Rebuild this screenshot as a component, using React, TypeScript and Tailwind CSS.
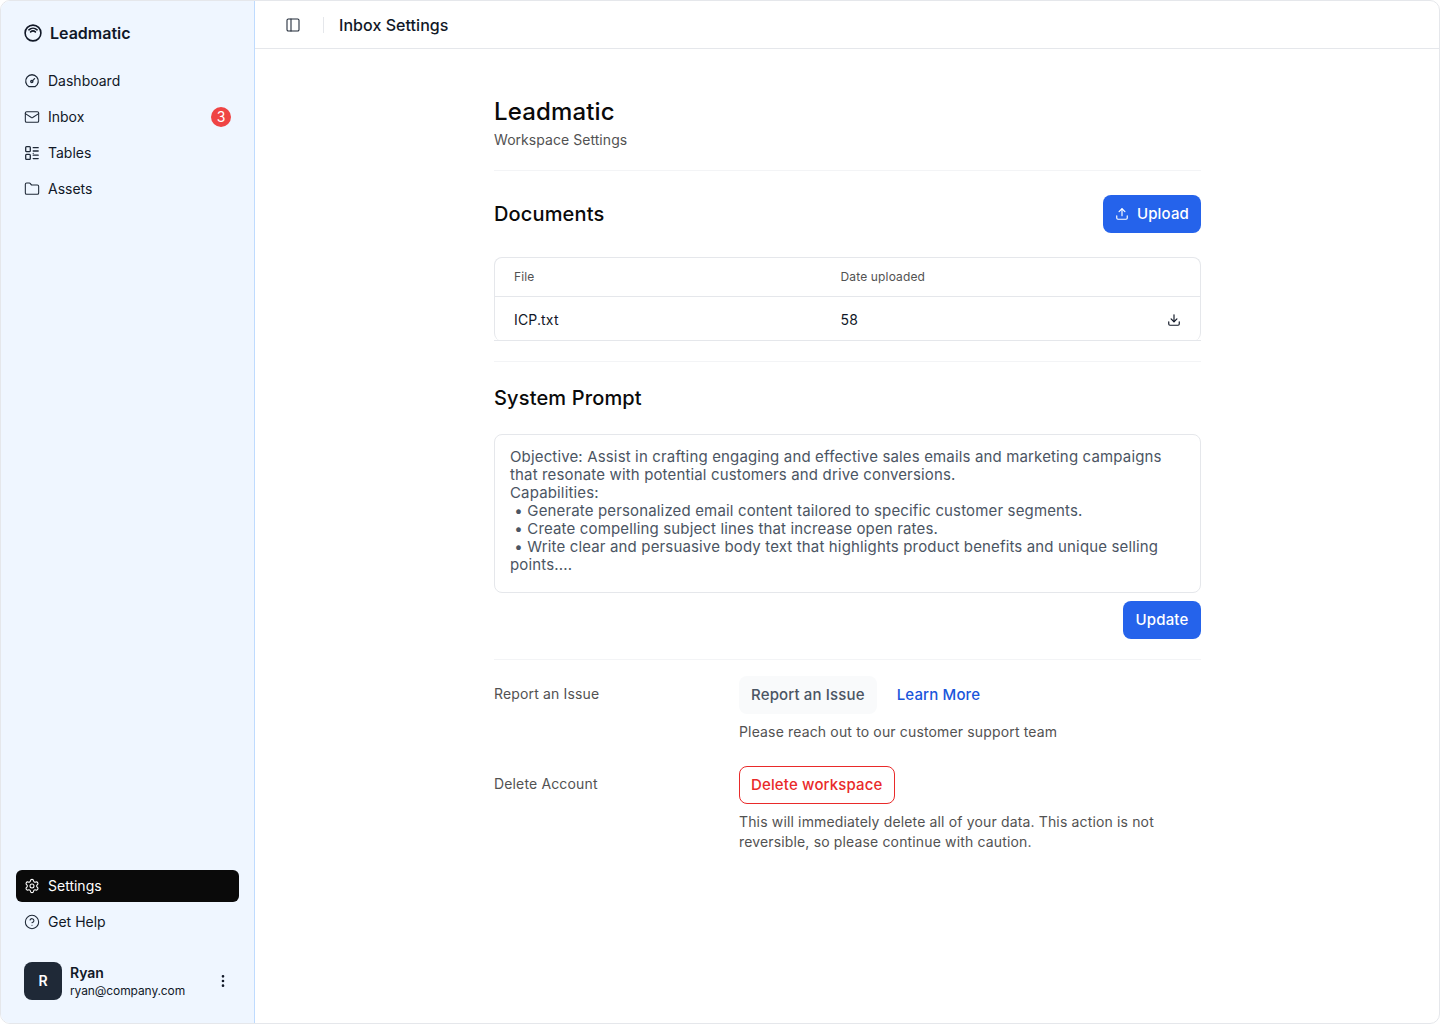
import React from 'react';
import {
  Download,
  EllipsisVertical,
  Folder,
  CircleHelp,
  Mail,
  PanelLeft,
  Settings,
  Upload,
} from 'lucide-react';

const TablesIcon = () => (
  <svg width="16" height="16" viewBox="0 0 16 16" fill="none" stroke="currentColor" strokeWidth="1.3" strokeLinecap="round">
    <rect x="1.7" y="1.7" width="4.6" height="5" rx="0.9" />
    <rect x="1.7" y="9.3" width="4.6" height="5" rx="0.9" />
    <path d="M9.2 2.7h5M9.2 6h5M9.2 8.3h0M9.2 10.2h5M9.2 13.6h5" />
  </svg>
);

const DashboardIcon = () => (
  <svg width="16" height="16" viewBox="0 0 16 16" fill="none" stroke="currentColor" strokeWidth="1.3" strokeLinecap="round" strokeLinejoin="round">
    <path d="M5 13.6a6.3 6.3 0 1 1 6 0z" />
    <circle cx="7.8" cy="8.4" r="1.1" />
    <path d="M8.6 7.6 10.6 5.6" />
  </svg>
);

const Logo = () => (
  <svg width="18" height="18" viewBox="0 0 18 18" fill="none" stroke="#111827" strokeWidth="1.6" strokeLinecap="round">
    <circle cx="9" cy="9" r="7.9" />
    <path d="M4.9 5.8a6.2 6.2 0 0 1 8.2 0" />
    <path d="M6.6 7.9a3.6 3.6 0 0 1 4.8 0" />
  </svg>
);

const navItems = [
  { label: 'Dashboard', icon: <DashboardIcon /> },
  { label: 'Inbox', icon: <Mail size={16} strokeWidth={1.6} />, badge: 3 },
  { label: 'Tables', icon: <TablesIcon /> },
  { label: 'Assets', icon: <Folder size={16} strokeWidth={1.6} /> },
];

function NavRow({ label, icon, badge, active }: { label: string; icon: React.ReactNode; badge?: number; active?: boolean }) {
  return (
    <div className={`flex h-8 items-center gap-2 rounded-md px-2 text-sm ${active ? 'bg-[#0a0a0a] text-white' : 'text-[#111827]'}`}>
      <span className={`flex w-4 shrink-0 justify-center ${active ? 'text-white' : 'text-[#1f2937]'}`}>{icon}</span>
      <span className="flex-1">{label}</span>
      {badge !== undefined && (
        <span className="flex h-5 w-5 items-center justify-center rounded-full bg-[#ef4444] text-sm text-white">{badge}</span>
      )}
    </div>
  );
}

export default function App() {
  return (
    <div className="h-[1024px] w-[1440px] overflow-hidden bg-white font-['Inter',sans-serif]">
      <div className="flex h-full overflow-hidden rounded-[10px] border border-[#e5e7eb]">
        <aside className="flex w-[254px] shrink-0 flex-col border-r border-[#bfdbfe] bg-[#eff6ff] px-[15px]">
          <div className="mt-4 flex h-[31px] items-center gap-2 px-2 text-base font-semibold text-[#111827]">
            <Logo />
            <span>Leadmatic</span>
          </div>
          <nav className="mt-[17px] flex flex-col gap-1">
            {navItems.map((item) => (
              <NavRow key={item.label} {...item} />
            ))}
          </nav>
          <div className="mt-auto flex flex-col gap-1">
            <NavRow label="Settings" icon={<Settings size={16} strokeWidth={1.6} />} active />
            <NavRow label="Get Help" icon={<CircleHelp size={16} strokeWidth={1.6} />} />
          </div>
          <div className="mb-[23px] mt-[24px] flex items-center gap-2 px-2">
            <div className="flex h-[38px] w-[38px] items-center justify-center rounded-lg bg-[#1f2937] text-sm font-semibold text-white">R</div>
            <div className="flex-1">
              <div className="text-sm font-semibold leading-[18px] text-[#111827]">Ryan</div>
              <div className="mt-px text-xs leading-[16px] tracking-[-0.1px] text-[#111827]">ryan@company.com</div>
            </div>
            <EllipsisVertical size={16} className="text-[#111827]" />
          </div>
        </aside>

        <main className="flex-1 pl-px">
          <header className="-ml-px flex h-12 items-center border-b border-[#e5e7eb] px-[30px]">
            <PanelLeft size={16} strokeWidth={1.6} className="text-[#1f2937]" />
            <div className="ml-[22px] h-4 w-px bg-[#e5e7eb]" />
            <h1 className="ml-[15px] text-base font-medium tracking-[0.05px] text-[#111827]">Inbox Settings</h1>
          </header>

          <div className="mx-auto w-[707px] pt-[47px] tracking-[0.15px]">
            <h2 className="text-2xl font-medium text-[#0a0a0a]">Leadmatic</h2>
            <p className="mt-[2px] text-sm tracking-[0.05px] text-[#525252]">Workspace Settings</p>
            <div className="mt-5 h-px bg-[#f3f4f6]" />

            <div className="mt-6 flex items-center justify-between">
              <h3 className="text-xl font-medium text-[#0a0a0a]">Documents</h3>
              <button className="flex h-[38px] items-center gap-2 rounded-lg bg-[#2563eb] px-3 text-[15px] font-[550] text-white">
                <Upload size={14} />
                Upload
              </button>
            </div>

            <div className="mt-6 rounded-lg border border-b-0 border-[#e5e7eb]">
              <div className="grid h-[39px] grid-cols-[326.5px_1fr] items-center border-b border-[#e5e7eb] px-[19px] text-xs text-[#525252]">
                <span>File</span>
                <span>Date uploaded</span>
              </div>
              <div className="-mx-px grid h-11 grid-cols-[326.5px_1fr_auto] items-center border-b border-[#e5e7eb] px-5 pt-[2px] text-sm text-[#111827]">
                <span>ICP.txt</span>
                <span>58</span>
                <Download size={14} />
              </div>
            </div>
            <div className="mt-5 h-px bg-[#f3f4f6]" />

            <h3 className="mt-[22px] text-xl font-medium text-[#0a0a0a]">System Prompt</h3>
            <div className="mt-[22px] rounded-lg border border-[#e5e7eb] px-[15px] pb-[18px] pt-[13px] text-[15px] leading-[18px] text-[#4b5563]">
              <p>Objective: Assist in crafting engaging and effective sales emails and marketing campaigns that resonate with potential customers and drive conversions.</p>
              <p>Capabilities:</p>
              <p>&nbsp;• Generate personalized email content tailored to specific customer segments.</p>
              <p>&nbsp;• Create compelling subject lines that increase open rates.</p>
              <p>&nbsp;• Write clear and persuasive body text that highlights product benefits and unique selling points....</p>
            </div>
            <div className="mt-2 flex justify-end">
              <button className="h-[38px] w-[78px] rounded-lg bg-[#2563eb] text-[15px] font-[550] text-white">Update</button>
            </div>
            <div className="mt-5 h-px bg-[#f3f4f6]" />

            <div className="mt-4 grid grid-cols-[245px_1fr]">
              <span className="pt-2 text-sm text-[#525252]">Report an Issue</span>
              <div>
                <div className="flex items-center gap-2">
                  <button className="h-[38px] rounded-lg bg-[#f9fafb] px-3 text-[15px] font-[550] text-[#4b5563]">Report an Issue</button>
                  <button className="h-[38px] px-3 text-[15px] font-[550] text-[#1a56db]">Learn More</button>
                </div>
                <p className="mt-2 text-sm leading-5 text-[#525252]">Please reach out to our customer support team</p>
              </div>
            </div>
            <div className="mt-6 grid grid-cols-[245px_1fr]">
              <span className="pt-2 text-sm text-[#525252]">Delete Account</span>
              <div>
                <button className="h-[38px] rounded-lg border border-[#e92a2a] px-[11px] text-[15px] font-[550] text-[#e92a2a]">Delete workspace</button>
                <p className="mt-2 text-sm leading-5 text-[#525252]">This will immediately delete all of your data. This action is not reversible, so please continue with caution.</p>
              </div>
            </div>
          </div>
        </main>
      </div>
    </div>
  );
}
